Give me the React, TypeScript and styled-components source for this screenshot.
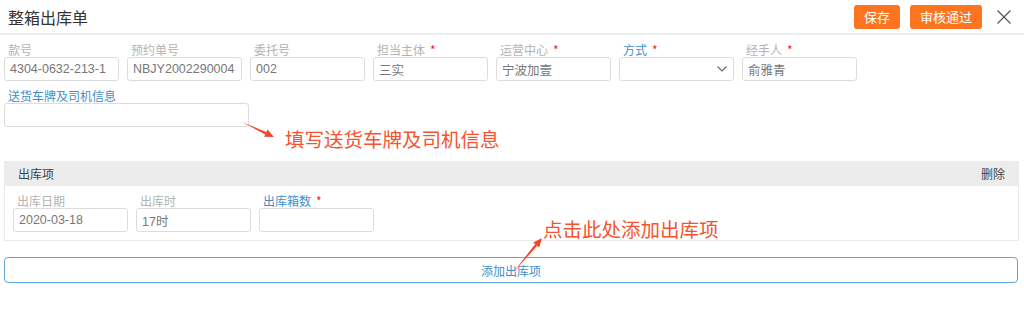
import React from 'react'
import styled, { createGlobalStyle } from 'styled-components'

const GlobalStyle = createGlobalStyle`
  html, body {
    margin: 0;
    padding: 0;
    background: #fff;
  }
  body {
    font-family: "Liberation Sans", "Noto Sans CJK SC", sans-serif;
    color: #333;
  }
`

const headerFields = [
  { label: '款号', value: '4304-0632-213-1' },
  { label: '预约单号', value: 'NBJY2002290004' },
  { label: '委托号', value: '002' },
  { label: '担当主体', value: '三实', required: true },
  { label: '运营中心', value: '宁波加壹', required: true },
  { label: '方式', value: '', required: true, active: true, select: true },
  { label: '经手人', value: '俞雅青', required: true },
]

const itemFields = [
  { label: '出库日期', value: '2020-03-18' },
  { label: '出库时', value: '17时' },
  { label: '出库箱数', value: '', required: true, active: true },
]

type FieldProps = {
  label: string
  value: string
  required?: boolean
  active?: boolean
  select?: boolean
  width?: number
}

function Field({ label, value, required, active, select, width = 115 }: FieldProps) {
  return (
    <FieldBox $width={width}>
      <Label $active={active}>
        {label}
        {required && <Star>*</Star>}
      </Label>
      <InputBox>
        <InputText>{value}</InputText>
        {select && (
          <svg width="10" height="6" viewBox="0 0 10 6">
            <path d="M0.5 0.5 L5 5 L9.5 0.5" fill="none" stroke="#666" strokeWidth="1.1" />
          </svg>
        )}
      </InputBox>
    </FieldBox>
  )
}

function Arrow({ x1, y1, x2, y2 }: { x1: number; y1: number; x2: number; y2: number }) {
  const left = Math.min(x1, x2) - 6
  const top = Math.min(y1, y2) - 6
  const w = Math.abs(x2 - x1) + 12
  const h = Math.abs(y2 - y1) + 12
  const ax = x1 - left
  const ay = y1 - top
  const bx = x2 - left
  const by = y2 - top
  const len = Math.hypot(bx - ax, by - ay)
  const ux = (bx - ax) / len
  const uy = (by - ay) / len
  const nx = -uy
  const ny = ux
  const head = 9
  const hx = bx - ux * head
  const hy = by - uy * head
  const p = (x: number, y: number) => `${x.toFixed(1)},${y.toFixed(1)}`
  const shaft = [
    p(ax, ay),
    p(hx + nx * 1.3, hy + ny * 1.3),
    p(hx - nx * 1.3, hy - ny * 1.3),
  ].join(' ')
  const tip = [p(bx, by), p(hx + nx * 4, hy + ny * 4), p(hx - nx * 4, hy - ny * 4)].join(' ')
  return (
    <ArrowSvg width={w} height={h} style={{ left, top }}>
      <polygon points={shaft} fill="#f4462a" />
      <polygon points={tip} fill="#f4462a" />
    </ArrowSvg>
  )
}

export default function App() {
  return (
    <Page>
      <GlobalStyle />
      <Header>
        <Title>整箱出库单</Title>
        <Actions>
          <OrangeButton>保存</OrangeButton>
          <OrangeButton>审核通过</OrangeButton>
          <CloseButton>
            <svg width="16" height="16" viewBox="0 0 16 16">
              <path d="M1.5 1.5 L14.5 14.5 M14.5 1.5 L1.5 14.5" stroke="#555" strokeWidth="1.2" />
            </svg>
          </CloseButton>
        </Actions>
      </Header>

      <Form>
        <FieldRow>
          {headerFields.map((f) => (
            <Field key={f.label} {...f} />
          ))}
        </FieldRow>
        <FieldRow>
          <Field label="送货车牌及司机信息" value="" active width={245} />
        </FieldRow>

        <Section>
          <SectionHeader>
            <span>出库项</span>
            <span>删除</span>
          </SectionHeader>
          <SectionBody>
            <FieldRow>
              {itemFields.map((f) => (
                <Field key={f.label} {...f} />
              ))}
            </FieldRow>
          </SectionBody>
        </Section>

        <AddButton>添加出库项</AddButton>
      </Form>

      <Note $left={285} $top={125}>填写送货车牌及司机信息</Note>
      <Note $left={543} $top={215}>点击此处添加出库项</Note>
      <Arrow x1={242} y1={122} x2={274} y2={137} />
      <Arrow x1={512} y1={274} x2={542} y2={238} />
    </Page>
  )
}

const Page = styled.div`
  position: relative;
  width: 1024px;
  height: 310px;
  overflow: hidden;
  background: #fff;
`

const Header = styled.div`
  display: flex;
  align-items: center;
  justify-content: space-between;
  height: 33px;
  padding: 0 12px 0 8px;
  border-bottom: 2px solid #eeeeee;
`

const Title = styled.div`
  font-family: "Noto Sans CJK SC", sans-serif;
  font-size: 16px;
  color: #333;
  line-height: 20px;
`

const Actions = styled.div`
  display: flex;
  align-items: center;
  gap: 10px;
  margin-top: 1px;
`

const OrangeButton = styled.button`
  height: 24px;
  padding: 0 10px;
  border: none;
  border-radius: 3px;
  background: #fc7420;
  color: #fff;
  font-family: "Noto Sans CJK SC", sans-serif;
  font-size: 13px;
  line-height: 24px;
`

const CloseButton = styled.div`
  display: flex;
  width: 16px;
  height: 16px;
  margin-left: 4px;
`

const Form = styled.div`
  display: flex;
  flex-direction: column;
  padding: 7px 5px 0 4px;
  gap: 7px;
`

const FieldRow = styled.div`
  display: flex;
  gap: 8px;
`

const FieldBox = styled.div<{ $width: number }>`
  display: flex;
  flex-direction: column;
  width: ${({ $width }) => $width}px;
`

const Label = styled.div<{ $active?: boolean }>`
  font-family: "Noto Sans CJK SC", sans-serif;
  font-size: 12px;
  line-height: 15px;
  height: 15px;
  padding-left: 4px;
  color: ${({ $active }) => ($active ? '#3d8fcc' : '#b3b3b3')};
  white-space: nowrap;
`

const Star = styled.span`
  color: #f0202a;
  margin-left: 5px;
`

const InputBox = styled.div`
  display: flex;
  align-items: center;
  justify-content: space-between;
  box-sizing: border-box;
  height: 24px;
  padding: 0 6px 0 5px;
  border: 1px solid #dcdcdc;
  border-radius: 3px;
  background: #fff;
`

const InputText = styled.span`
  font-size: 12.5px;
  color: #777;
  white-space: nowrap;
`

const Section = styled.div`
  display: flex;
  flex-direction: column;
  margin-top: 27px;
`

const SectionHeader = styled.div`
  display: flex;
  justify-content: space-between;
  align-items: center;
  height: 25px;
  padding: 0 14px;
  background: #ececec;
  font-family: "Noto Sans CJK SC", sans-serif;
  font-size: 12px;
  color: #444;
`

const SectionBody = styled.div`
  padding: 7px 8px 8px;
  border: 1px solid #e9e9e9;
  border-top: none;
`

const AddButton = styled.div`
  display: flex;
  align-items: center;
  justify-content: center;
  box-sizing: border-box;
  height: 26px;
  margin-top: 9px;
  margin-right: 1px;
  border: 1px solid #5ea6d8;
  border-radius: 4px;
  font-family: "Noto Sans CJK SC", sans-serif;
  font-size: 12px;
  color: #3d8fcc;
`

const Note = styled.div<{ $left: number; $top: number }>`
  position: absolute;
  left: ${({ $left }) => $left}px;
  top: ${({ $top }) => $top}px;
  font-family: "Noto Sans CJK SC", sans-serif;
  font-size: 19.5px;
  line-height: 28px;
  color: #f4532f;
  white-space: nowrap;
`

const ArrowSvg = styled.svg`
  position: absolute;
  overflow: visible;
`
